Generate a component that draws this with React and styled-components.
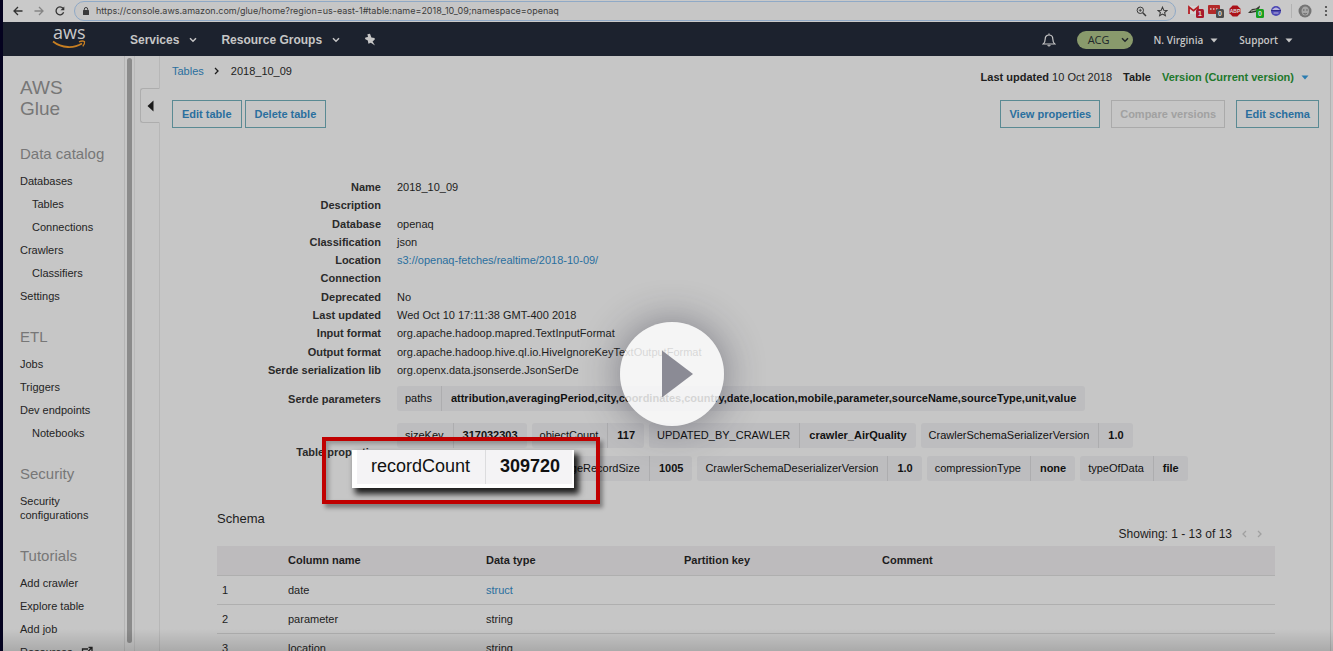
import React from "react";
import styled, { createGlobalStyle, css } from "styled-components";

const sans = `"Liberation Sans", Arial, sans-serif`;
const ember = `"Open Sans", "Noto Sans", sans-serif`;
const blue = "#2a6f9e";

const Global = createGlobalStyle`
  *, *::before, *::after { box-sizing: border-box; }
  body { margin: 0; background: #c6c6c6; color: #1d1d1d; font: 11px/14px ${sans}; }
  a { color: inherit; text-decoration: none; }
  button { font: inherit; color: inherit; background: none; border: 0; padding: 0; cursor: pointer; }
  ul, dl, dd, h1, h2 { margin: 0; padding: 0; list-style: none; font-weight: normal; }
`;

const Screen = styled.div`
  position: relative;
  display: flex;
  flex-direction: column;
  height: 100vh;
  overflow: hidden;
  border-left: 3px solid #04021f;
`;

const BrowserBar = styled.div`
  display: flex;
  flex: none;
  align-items: center;
  height: 22px;
  padding: 0 2px 0 10px;
  background: #c9c9c9;
  svg { flex: none; display: block; }
`;
const NavButtons = styled.div`
  display: flex;
  flex: none;
  gap: 11px;
  margin-right: 9px;
`;
const AddressField = styled.div`
  display: flex;
  flex: 1;
  align-items: center;
  gap: 7px;
  height: 20px;
  padding: 0 7px 0 8px;
  border: 1px solid #8fa9c6;
  border-radius: 10px;
  background: #c6c6c6;
`;
const AddressInput = styled.input`
  flex: 1;
  min-width: 0;
  padding: 0;
  border: 0;
  outline: 0;
  background: transparent;
  color: #3c3c3c;
  font: 9px/14px Inter, sans-serif;
`;
const FieldIcons = styled.div`
  display: flex;
  gap: 10px;
`;
const Extensions = styled.div`
  display: flex;
  align-items: center;
  gap: 4px;
  margin-left: 12px;
`;
const BarDivider = styled.span`
  width: 1px;
  height: 14px;
  margin: 0 1px 0 7px;
  background: #b2b2b2;
`;

const Header = styled.header`
  display: flex;
  flex: none;
  align-items: center;
  height: 34px;
  padding: 2px 40px 0 49px;
  background: #1c222e;
  color: #c6c6c6;
  svg { display: block; }
`;
const HomeLink = styled.a`
  margin-right: 43px;
  svg { overflow: visible; }
`;
const MenuButton = styled.button`
  display: flex;
  align-items: center;
  gap: 10px;
  margin-right: 24px;
  font: bold 12px/16px ${sans};
`;
const AccountMenus = styled.div`
  display: flex;
  align-items: center;
  gap: 21px;
  margin-left: auto;
`;
const AccountButton = styled.button`
  display: flex;
  align-items: center;
  gap: 7px;
  font: 600 10px/16px ${ember};
  ${(p) =>
    p.$pill &&
    css`
      height: 18px;
      padding: 0 4px 0 11px;
      gap: 11px;
      border-radius: 9px;
      background: #899a6c;
      color: #20262a;
      font-weight: 400;
      font-size: 11px;
    `}
`;

const Body = styled.div`
  display: flex;
  flex: 1;
  min-height: 0;
`;
const Sidebar = styled.nav`
  flex: none;
  width: 122px;
  padding: 21px 12px 0 17px;
  border-right: 1px solid #b5b5b5;
  overflow: hidden;
  color: #242424;
`;
const Product = styled.h1`
  width: 60px;
  margin-bottom: 25px;
  color: #777;
  font-size: 19px;
  line-height: 21px;
`;
const Group = styled.section`
  margin-bottom: 20px;
`;
const GroupTitle = styled.h2`
  margin-bottom: 5px;
  color: #777;
  font-size: 15px;
  line-height: 20px;
`;
const NavItem = styled.li`
  padding: 5px 0 4px ${(p) => (p.$nested ? "12px" : "0")};
  a { display: inline-flex; align-items: center; gap: 8px; vertical-align: top; }
`;
const Gutter = styled.div`
  flex: none;
  width: 10px;
  padding: 2px 2px 8px;
  border-right: 1px solid #b9b9b9;
`;
const Thumb = styled.div`
  width: 5px;
  height: 100%;
  border-radius: 3px;
  background: #8b8b8b;
`;
const CollapseRail = styled.div`
  flex: none;
  width: 25px;
  padding: 32px 0 0 5px;
  border-right: 1px solid #b7b7b7;
`;
const CollapseButton = styled.button`
  display: flex;
  align-items: center;
  justify-content: center;
  width: 20px;
  height: 35px;
  border: 1px solid #adadad;
  border-right-color: #c6c6c6;
  border-radius: 3px 0 0 3px;
`;

const Main = styled.main`
  flex: 1;
  min-width: 0;
  margin-right: 2px;
  border-right: 1px solid #b2b2b2;
`;
const TopLine = styled.div`
  display: flex;
  justify-content: space-between;
  padding: 8px 21px 0 12px;
`;
const Breadcrumb = styled.nav`
  display: flex;
  align-items: flex-start;
  gap: 10px;
  svg { margin: 3px 2px 0 0; }
`;
const Link = styled.a`
  color: ${blue};
`;
const VersionLine = styled.div`
  display: flex;
  align-items: center;
  gap: 11px;
  padding-top: 6px;
`;
const VersionButton = styled.button`
  display: flex;
  align-items: center;
  gap: 7px;
  color: #21782c;
  font-weight: bold;
`;
const Actions = styled.div`
  display: flex;
  justify-content: space-between;
  padding: 16px 11px 0 12px;
`;
const ButtonSet = styled.div`
  display: flex;
  gap: ${(p) => (p.$wide ? "11px" : "3px")};
`;
const ActionButton = styled.button`
  height: 28px;
  padding: 0 ${(p) => (p.$tight ? "8px" : "9px")};
  border: 1px solid #5a8a93;
  color: ${blue};
  font-weight: bold;
  &:disabled { border-color: #aaa; color: #a1a1a1; cursor: default; }
`;

const Details = styled.dl`
  display: grid;
  grid-template-columns: 221px 1fr;
  grid-auto-rows: 1fr;
  align-items: center;
  column-gap: 16px;
  height: 201px;
  margin-top: 50px;
`;
const Params = styled.dl`
  display: grid;
  grid-template-columns: 221px 1fr;
  align-items: center;
  gap: 12px 16px;
  margin-top: 7px;
`;
const Label = styled.dt`
  color: #2a2a2a;
  font-weight: bold;
  text-align: right;
`;
const ChipList = styled.dd`
  display: grid;
  gap: 8px;
`;
const ChipLine = styled.div`
  display: flex;
  gap: 5px;
`;
const Chip = styled.span`
  display: flex;
  flex: none;
  height: 25px;
  border-radius: 3px;
  background: #bdbdbf;
  color: #111;
  line-height: 25px;
  white-space: nowrap;
`;
const ChipKey = styled.span`
  padding: 0 9px 0 8px;
  border-right: 1px solid #adadaf;
`;
const ChipValue = styled.b`
  padding: 0 9px;
`;

const Schema = styled.section`
  margin: 30px 55px 0 57px;
`;
const SchemaTitle = styled.h2`
  font-size: 13px;
  line-height: 16px;
`;
const Pager = styled.div`
  display: flex;
  align-items: center;
  justify-content: flex-end;
  gap: 10px;
  padding-right: 13px;
  font-size: 12px;
  button { display: flex; color: #a0a0a0; }
`;
const Table = styled.table`
  width: 100%;
  margin-top: 5px;
  border-collapse: collapse;
  table-layout: fixed;
`;
const Cell = styled.td`
  width: ${(p) => p.$width || "auto"};
  height: 29px;
  padding: 0 5px;
  border-bottom: 1px solid #afafaf;
  text-align: left;
`;
const HeadRow = styled.tr`
  background: #bdbbbd;
`;

const Highlight = styled.div`
  position: absolute;
  top: 437px;
  left: 319px;
  width: 278px;
  height: 67px;
  padding: 9px 0 0 26px;
  border: 4px solid #c00000;
  box-shadow: 3px 4px 4px rgba(0, 0, 0, 0.35), inset 3px 3px 4px rgba(0, 0, 0, 0.25);
`;
const Callout = styled.div`
  display: flex;
  width: 222px;
  height: 38px;
  padding: 0 2px 4px 5px;
  background: #fff;
  box-shadow: 4px 5px 6px 1px rgba(0, 0, 0, 0.85);
  color: #111;
  font-size: 18px;
  line-height: 33px;
  span { padding: 0 15px 0 14px; background: #f4f3f5; border-right: 1px solid #dcdcde; }
  b { flex: 1; padding-left: 14px; background: #f4f3f5; }
`;
const PlayButton = styled.button`
  position: absolute;
  top: 322px;
  left: 617px;
  width: 104px;
  height: 104px;
  border-radius: 50%;
  background: rgba(255, 255, 255, 0.82);
  box-shadow: 0 0 40px rgba(30, 30, 50, 0.45);
  svg { display: block; }
`;
const BottomShade = styled.div`
  position: absolute;
  right: 0;
  bottom: 0;
  left: 0;
  height: 22px;
  background: linear-gradient(rgba(0, 0, 0, 0), rgba(0, 0, 0, 0.14));
  pointer-events: none;
`;

const Stroke = ({ d, w = 12, h = w, box = "0 0 12 12", width = 1.3, ...rest }) => (
  <svg width={w} height={h} viewBox={box} fill="none" stroke="currentColor" strokeWidth={width} aria-hidden="true" {...rest}>
    <path d={d} />
  </svg>
);
const Caret = ({ color = "currentColor" }) => (
  <svg width="8" height="5" viewBox="0 0 8 5" fill={color} aria-hidden="true">
    <path d="M0.5 0.5h7L4 4.5z" />
  </svg>
);
const Chevron = () => <Stroke d="M1 1.2L4 4.2L7 1.2" w={8} h={6} box="0 0 8 6" width={1.5} />;
const AngleRight = () => <Stroke d="M1 1L4 4L1 7" w={5} h={8} box="0 0 5 8" />;
const AngleLeft = () => <Stroke d="M4 1L1 4L4 7" w={5} h={8} box="0 0 5 8" />;

const Badge = ({ fill, children }) => (
  <>
    <rect x="8" y="6" width="8" height="9" rx="1.5" fill={fill} />
    <text x="12" y="13" textAnchor="middle" fontSize="7" fontWeight="700" fontFamily="Liberation Sans" fill="#d8d8d8">
      {children}
    </text>
  </>
);

const BrowserChrome = () => (
  <BrowserBar>
    <NavButtons>
      <button aria-label="Back"><Stroke w={10} box="0 0 10 10" d="M9.5 5H1M5 1L1 5L5 9" color="#333" /></button>
      <button aria-label="Forward"><Stroke w={10} box="0 0 10 10" d="M0.5 5H9M5 1L9 5L5 9" color="#858585" /></button>
      <button aria-label="Reload">
        <svg width="10" height="10" viewBox="0 0 10 10" aria-hidden="true">
          <path d="M8.6 6.3A3.9 3.9 0 1 1 7.9 2.3" fill="none" stroke="#333" strokeWidth="1.3" />
          <path d="M9.3 0.4V4.2H5.5z" fill="#333" />
        </svg>
      </button>
    </NavButtons>
    <AddressField>
      <svg width="6" height="8" viewBox="0 0 6 8" aria-hidden="true">
        <rect y="3" width="6" height="5" rx="0.6" fill="#3a3a3a" />
        <path d="M1.3 3.3V2.2a1.7 1.7 0 0 1 3.4 0v1.1" fill="none" stroke="#3a3a3a" />
      </svg>
      <AddressInput
        aria-label="Address"
        defaultValue="https://console.aws.amazon.com/glue/home?region=us-east-1#table:name=2018_10_09;namespace=openaq"
      />
      <FieldIcons>
        <svg width="11" height="11" viewBox="0 0 11 11" fill="none" stroke="#3a3a3a" aria-hidden="true">
          <circle cx="4.3" cy="4.3" r="3.2" />
          <path d="M6.8 6.8L10 10" strokeWidth="1.5" />
          <path d="M2.8 4.3h3M4.3 2.8v3" strokeWidth="0.8" />
        </svg>
        <Stroke w={11} width={1.1} color="#3a3a3a" d="M6 1.2L7.4 4.6L11 4.8L8.3 7.1L9.2 10.7L6 8.8L2.8 10.7L3.7 7.1L1 4.8L4.6 4.6Z" />
      </FieldIcons>
    </AddressField>
    <Extensions>
      <svg width="16" height="16" viewBox="0 0 16 16" aria-hidden="true">
        <rect x="0" y="3" width="11" height="8" fill="#d4d4d4" />
        <path d="M1 11V4L5.5 7.6L10 4V11" fill="none" stroke="#b51f24" strokeWidth="1.8" />
        <Badge fill="#a8182b">1</Badge>
      </svg>
      <svg width="16" height="16" viewBox="0 0 16 16" aria-hidden="true">
        <rect x="0" y="2" width="12" height="9" rx="1" fill="#b32a2a" />
        <path d="M2 6h1.5M5 6h1.5M8 6h1.5" stroke="#d8c6c6" strokeWidth="1.4" />
        <Badge fill="#4c4c4c">0</Badge>
      </svg>
      <svg width="16" height="16" viewBox="0 0 16 16" aria-hidden="true">
        <path d="M4.7 2.5h4.6L12.5 5.7v4.6L9.3 13.5H4.7L1.5 10.3V5.7z" fill="#ab1118" />
        <text x="7" y="10" textAnchor="middle" fontSize="5" fontWeight="700" fontFamily="Liberation Sans" fill="#dadada">ABP</text>
      </svg>
      <svg width="16" height="16" viewBox="0 0 16 16" aria-hidden="true">
        <path d="M0 10L4 6L8 5.5L12 2.5L11.5 5L8 9L3 10z" fill="#35382f" />
        <path d="M3 8.2L8.5 6.8" stroke="#b4b4a8" />
        <Badge fill="#16a01e">0</Badge>
      </svg>
      <svg width="16" height="16" viewBox="0 0 16 16" aria-hidden="true">
        <circle cx="8" cy="8" r="5" fill="#4c48b4" />
        <path d="M4 7Q8 2 12 7z" fill="#b9b5dc" />
        <path d="M3 7.5h10" stroke="#2f2c86" />
        <path d="M5.5 10h5" stroke="#b9b5dc" />
      </svg>
    </Extensions>
    <BarDivider />
    <svg width="24" height="16" viewBox="0 0 24 16" aria-hidden="true">
      <circle cx="12" cy="8" r="6.5" fill="#747474" />
      <ellipse cx="12.3" cy="8" rx="3.8" ry="4.6" fill="#a7a7a7" />
      <path d="M10 7h1.5M13.2 7h1.5M10.5 10.5q1.7 1 3.3 0" stroke="#555" fill="none" strokeWidth="0.9" />
    </svg>
    <svg width="14" height="12" viewBox="0 0 14 12" fill="#444" aria-hidden="true">
      <circle cx="9" cy="2" r="1.1" /><circle cx="9" cy="6" r="1.1" /><circle cx="9" cy="10" r="1.1" />
    </svg>
  </BrowserBar>
);

const AwsHeader = () => (
  <Header>
    <HomeLink href="#" aria-label="AWS home">
      <svg width="35" height="26" viewBox="0 0 35 26" aria-hidden="true">
        <text x="1" y="12" fontSize="18" fontFamily="Open Sans" fill="#c9c9c9">aws</text>
        <path d="M1 14.5C10 21.5 22 21.5 30 16.5" fill="none" stroke="#c77f22" strokeWidth="1.8" />
        <path d="M27 14.8C29 13.9 31.5 14 32.5 14.5C32.9 16 32.1 17.8 30.8 19.4" fill="none" stroke="#c77f22" strokeWidth="1.3" />
      </svg>
    </HomeLink>
    <MenuButton>Services <Chevron /></MenuButton>
    <MenuButton>Resource Groups <Chevron /></MenuButton>
    <button aria-label="Pin shortcuts">
      <svg width="14" height="14" viewBox="0 0 14 14" fill="#c6c6c6" aria-hidden="true">
        <path d="M3.4 1.2L6 0.8L7.4 4.4L10.6 5L10.8 6.6L8.6 8.4L11 12.6L6.8 9.8L4.4 10.8L3.8 7.6L1 6L1.4 4.4L4 4z" />
      </svg>
    </button>
    <AccountMenus>
      <button aria-label="Notifications">
        <svg width="14" height="14" viewBox="0 0 14 14" fill="none" stroke="#c6c6c6" strokeWidth="1.2" aria-hidden="true">
          <path d="M1.2 11C3 9.5 3.2 8 3.2 6C3.2 3.6 4.8 2 7 2S10.8 3.6 10.8 6C10.8 8 11 9.5 12.8 11zM7 0.5V2M5.7 12.2Q7 13.8 8.3 12.2" />
        </svg>
      </button>
      <AccountButton $pill>ACG <Chevron /></AccountButton>
      <AccountButton>N. Virginia <Caret /></AccountButton>
      <AccountButton>Support <Caret /></AccountButton>
    </AccountMenus>
  </Header>
);

const groups = [
  ["Data catalog", ["Databases", ">Tables", ">Connections", "Crawlers", ">Classifiers", "Settings"]],
  ["ETL", ["Jobs", "Triggers", "Dev endpoints", ">Notebooks"]],
  ["Security", ["Security configurations"]],
  ["Tutorials", ["Add crawler", "Explore table", "Add job", "Resources"]],
];

const facts = [
  ["Name", "2018_10_09"],
  ["Description", ""],
  ["Database", "openaq"],
  ["Classification", "json"],
  ["Location", <Link href="#">s3://openaq-fetches/realtime/2018-10-09/</Link>],
  ["Connection", ""],
  ["Deprecated", "No"],
  ["Last updated", "Wed Oct 10 17:11:38 GMT-400 2018"],
  ["Input format", "org.apache.hadoop.mapred.TextInputFormat"],
  ["Output format", "org.apache.hadoop.hive.ql.io.HiveIgnoreKeyTextOutputFormat"],
  ["Serde serialization lib", "org.openx.data.jsonserde.JsonSerDe"],
];

const serde = [
  [["paths", "attribution,averagingPeriod,city,coordinates,country,date,location,mobile,parameter,sourceName,sourceType,unit,value"]],
];
const properties = [
  [["sizeKey", "317032303"], ["objectCount", "117"], ["UPDATED_BY_CRAWLER", "crawler_AirQuality"], ["CrawlerSchemaSerializerVersion", "1.0"]],
  [["recordCount", "309720"], ["averageRecordSize", "1005"], ["CrawlerSchemaDeserializerVersion", "1.0"], ["compressionType", "none"], ["typeOfData", "file"]],
];

const Chips = ({ lines }) => (
  <ChipList>
    {lines.map((line, i) => (
      <ChipLine key={i}>
        {line.map(([k, v]) => (
          <Chip key={k}><ChipKey>{k}</ChipKey><ChipValue>{v}</ChipValue></Chip>
        ))}
      </ChipLine>
    ))}
  </ChipList>
);

const columns = [["", "66px"], ["Column name", "198px"], ["Data type", "198px"], ["Partition key", "198px"], ["Comment", "auto"]];
const rows = [["date", "struct"], ["parameter", "string"], ["location", "string"]];

export default function App() {
  return (
    <Screen>
      <Global />
      <BrowserChrome />
      <AwsHeader />
      <Body>
        <Sidebar>
          <Product>AWS Glue</Product>
          {groups.map(([title, items]) => (
            <Group key={title}>
              <GroupTitle>{title}</GroupTitle>
              <ul>
                {items.map((item) => (
                  <NavItem key={item} $nested={item.startsWith(">")}>
                    <a href="#">
                      {item.replace(">", "")}
                      {item === "Resources" && <Stroke w={12} d="M7 3H1.5V11H9V6.5M5 7.5L11 1.5M7.5 1.5H11V5" />}
                    </a>
                  </NavItem>
                ))}
              </ul>
            </Group>
          ))}
        </Sidebar>
        <Gutter><Thumb /></Gutter>
        <CollapseRail>
          <CollapseButton aria-label="Collapse navigation">
            <svg width="7" height="12" viewBox="0 0 7 12" fill="#1a1a1a" aria-hidden="true"><path d="M6.5 0.5V11.5L0.5 6z" /></svg>
          </CollapseButton>
        </CollapseRail>
        <Main>
          <TopLine>
            <Breadcrumb aria-label="Breadcrumb">
              <Link href="#">Tables</Link>
              <AngleRight />
              <span>2018_10_09</span>
            </Breadcrumb>
            <VersionLine>
              <span><b>Last updated</b> 10 Oct 2018</span>
              <b>Table</b>
              <VersionButton>Version (Current version) <Caret color="#2a7cb0" /></VersionButton>
            </VersionLine>
          </TopLine>
          <Actions>
            <ButtonSet>
              <ActionButton>Edit table</ActionButton>
              <ActionButton>Delete table</ActionButton>
            </ButtonSet>
            <ButtonSet $wide>
              <ActionButton $tight>View properties</ActionButton>
              <ActionButton $tight disabled>Compare versions</ActionButton>
              <ActionButton $tight>Edit schema</ActionButton>
            </ButtonSet>
          </Actions>
          <Details>
            {facts.map(([k, v]) => (
              <React.Fragment key={k}><Label>{k}</Label><dd>{v}</dd></React.Fragment>
            ))}
          </Details>
          <Params>
            <Label>Serde parameters</Label>
            <Chips lines={serde} />
            <Label>Table properties</Label>
            <Chips lines={properties} />
          </Params>
          <Schema>
            <SchemaTitle>Schema</SchemaTitle>
            <Pager>
              Showing: 1 - 13 of 13
              <button aria-label="Previous page"><AngleLeft /></button>
              <button aria-label="Next page"><AngleRight /></button>
            </Pager>
            <Table>
              <thead>
                <HeadRow>
                  {columns.map(([name, width]) => (
                    <Cell as="th" key={name} $width={width}>{name}</Cell>
                  ))}
                </HeadRow>
              </thead>
              <tbody>
                {rows.map(([name, type], i) => (
                  <tr key={name}>
                    <Cell>{i + 1}</Cell>
                    <Cell>{name}</Cell>
                    <Cell>{type === "struct" ? <Link href="#">{type}</Link> : type}</Cell>
                    <Cell />
                    <Cell />
                  </tr>
                ))}
              </tbody>
            </Table>
          </Schema>
        </Main>
      </Body>
      <Highlight>
        <Callout><span>recordCount</span><b>309720</b></Callout>
      </Highlight>
      <PlayButton aria-label="Play video">
        <svg width="104" height="104" viewBox="0 0 104 104" aria-hidden="true"><path d="M42 28.5V75.5L73 52z" fill="#8b8b95" /></svg>
      </PlayButton>
      <BottomShade />
    </Screen>
  );
}
